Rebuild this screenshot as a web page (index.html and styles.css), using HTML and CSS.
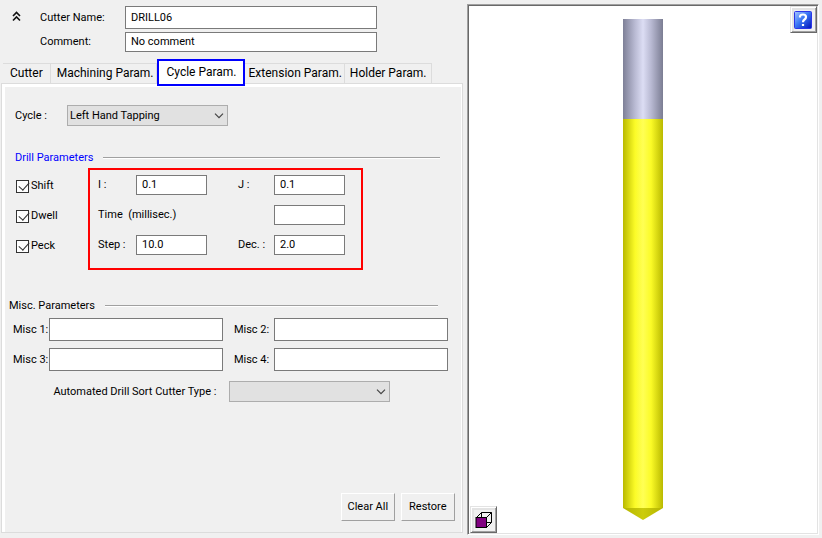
FILE: index.html
```html
<!DOCTYPE html>
<html lang="en">
<head>
  <meta charset="UTF-8">
  <meta name="viewport" content="width=device-width, initial-scale=1.0">
  <title>Cutter Parameters</title>
  <link rel="stylesheet" href="styles.css">
</head>
<body>
  <form class="settings">
    <div class="cutter-head">
      <button type="button" class="collapse" aria-label="Collapse">
        <svg width="9" height="11" viewBox="0 0 9 11"><path d="M1 5 4.500 1.500 8 5M1 9.500 4.500 6 8 9.500" fill="none" stroke="#111" stroke-width="1.600"/></svg>
      </button>
      <div class="cutter-fields">
        <label for="name">Cutter Name:</label>
        <input type="text" id="name" class="name-input" value="DRILL06">
        <label for="comment">Comment:</label>
        <input type="text" id="comment" value="No comment">
      </div>
    </div>
    <nav class="tabs">
      <a href="#" class="tab">Cutter</a>
      <a href="#" class="tab tab-wide">Machining Param.</a>
      <a href="#" class="tab current">Cycle Param.</a>
      <a href="#" class="tab tab-ext">Extension Param.</a>
      <a href="#" class="tab tab-holder">Holder Param.</a>
    </nav>
    <div class="panel">
      <div class="cycle-row">
        <label for="cycle">Cycle :</label>
        <span class="dropdown">
          <select id="cycle"><option>Left Hand Tapping</option></select>
          <svg class="arrow" width="10" height="6" viewBox="0 0 10 6"><path d="M1 .7 5 4.700 9 .7" fill="none" stroke="#444" stroke-width="1.200"/></svg>
        </span>
      </div>
      <div class="title drill-title"><span>Drill Parameters</span><hr></div>
      <div class="drill">
        <div class="checks">
          <label><input type="checkbox" checked>Shift</label>
          <label><input type="checkbox" checked>Dwell</label>
          <label><input type="checkbox" checked>Peck</label>
        </div>
        <div class="values">
          <label for="i">I :</label>
          <input type="text" id="i" value="0.1">
          <label for="j" class="second">J :</label>
          <input type="text" id="j" value="0.1">
          <label for="time" class="time">Time&nbsp; (millisec.)</label>
          <input type="text" id="time">
          <label for="step">Step :</label>
          <input type="text" id="step" value="10.0">
          <label for="dec" class="second">Dec. :</label>
          <input type="text" id="dec" value="2.0">
        </div>
      </div>
      <div class="title misc-title"><span>Misc. Parameters</span><hr></div>
      <div class="misc">
        <label for="misc1">Misc 1:</label>
        <input type="text" id="misc1">
        <label for="misc2" class="second">Misc 2:</label>
        <input type="text" id="misc2">
        <label for="misc3">Misc 3:</label>
        <input type="text" id="misc3">
        <label for="misc4" class="second">Misc 4:</label>
        <input type="text" id="misc4">
      </div>
      <div class="sort-row">
        <label for="sort">Automated Drill Sort Cutter Type :</label>
        <span class="dropdown">
          <select id="sort"><option></option></select>
          <svg class="arrow" width="10" height="6" viewBox="0 0 10 6"><path d="M1 .7 5 4.700 9 .7" fill="none" stroke="#444" stroke-width="1.200"/></svg>
        </span>
      </div>
      <div class="actions">
        <button type="button">Clear All</button>
        <button type="button">Restore</button>
      </div>
    </div>
  </form>
  <div class="preview">
    <svg class="tool" width="40" height="501" viewBox="0 0 40 501">
      <defs>
        <linearGradient id="shank">
          <stop offset="0" stop-color="#7e8097"/>
          <stop offset=".3" stop-color="#b9bad3"/>
          <stop offset=".5" stop-color="#dcddf4"/>
          <stop offset=".7" stop-color="#b9bad3"/>
          <stop offset="1" stop-color="#7b7d93"/>
        </linearGradient>
        <linearGradient id="flute">
          <stop offset="0" stop-color="#b9b900"/>
          <stop offset=".3" stop-color="#fbfb27"/>
          <stop offset=".5" stop-color="#ffff55"/>
          <stop offset=".7" stop-color="#fbfb27"/>
          <stop offset="1" stop-color="#b9b900"/>
        </linearGradient>
        <linearGradient id="tip">
          <stop offset="0" stop-color="#b5b500"/>
          <stop offset=".5" stop-color="#cccc0c"/>
          <stop offset="1" stop-color="#b5b500"/>
        </linearGradient>
      </defs>
      <rect width="40" height="100" fill="url(#shank)"/>
      <rect y="100" width="40" height="389" fill="url(#flute)"/>
      <path d="M0 489H40L20 501z" fill="url(#tip)"/>
    </svg>
    <button type="button" class="tool-btn help" aria-label="Help">
      <svg width="18" height="18" viewBox="0 0 18 18">
        <defs>
          <linearGradient id="blue" x2="1" y2="1">
            <stop offset="0" stop-color="#a9c8ff"/>
            <stop offset=".45" stop-color="#3b78f5"/>
            <stop offset="1" stop-color="#0010b8"/>
          </linearGradient>
        </defs>
        <rect x=".5" y=".5" width="17" height="17" rx="1" fill="url(#blue)" stroke="#2b35e8"/>
        <path d="M6 6.500V5.500Q6.200 3.500 9 3.500Q12 3.500 12 6Q12 7.500 10.500 8.500Q9 9.500 9 11.200M9 13v2" fill="none" stroke="#fff" stroke-width="2.200"/>
      </svg>
    </button>
    <button type="button" class="tool-btn view" aria-label="View">
      <svg width="17" height="16" viewBox="0 0 17 16">
        <path d="M1.500 5.500 6.500.5H16.500V10.500L11.500 15.500M6.500.5V5M11.500 5.500 16.500.5M11.500 10.500H16.500" fill="none" stroke="#000"/>
        <rect x="1" y="5.500" width="10.500" height="10" fill="#800080" stroke="#000"/>
      </svg>
    </button>
  </div>
</body>
</html>
```
FILE: styles.css
```css
* {
  box-sizing: border-box;
}
body {
  margin: 0;
  min-height: 100vh;
  padding: 4px 3px 3px 0;
  display: grid;
  grid-template-columns: 57fr 43fr;
  background: #f0f0f0;
  color: #000;
  font: 11px/20px Roboto, "Noto Sans", sans-serif;
}
input, select, button {
  font: inherit;
  color: inherit;
  margin: 0;
  border-radius: 0;
}
input[type="text"] {
  width: 100%;
  min-width: 0;
  height: 20px;
  padding: 0 5px;
  border: 1px solid #7a7a7a;
  background: #fff;
}
label {
  white-space: nowrap;
}
.settings {
  display: flex;
  flex-direction: column;
  padding: 2px 4px 2px 1px;
}
.cutter-head {
  display: flex;
  align-items: flex-start;
  padding: 0 86px 0 11px;
}
.collapse {
  padding: 5px 0 0;
  width: 28px;
  border: 0;
  background: none;
  line-height: 0;
  text-align: left;
}
.cutter-fields {
  flex: 1;
  display: grid;
  grid-template-columns: 85px 1fr;
  row-gap: 3px;
  align-items: center;
}
.cutter-fields .name-input {
  height: 23px;
}
.tabs {
  display: flex;
  height: 20px;
  margin: 11px 0 0 2px;
  font: 12px/19px Roboto, "Open Sans", sans-serif;
}
.tab {
  padding: 0 7px;
  border: 1px solid #dcdcdc;
  border-width: 1px 1px 0 0;
  color: #000;
  text-decoration: none;
  white-space: nowrap;
}
.tab-wide {
  padding: 0 2px 0 6px;
}
.tab-ext {
  padding: 0 2px 0 4px;
}
.tab-holder {
  padding: 0 5px;
}
.current {
  z-index: 1;
  height: 27px;
  margin-top: -4px;
  padding: 2px 6px 0 8px;
  border: 2px solid #00f;
  background: #fff;
}
.panel {
  flex: 1;
  display: flex;
  flex-direction: column;
  padding: 18px 3px 7px 7px;
  border: 1px solid #dcdcdc;
  box-shadow: inset 1px 3px #fff, inset 3px 0 #fff, inset -1px 0 #fff;
}
.cycle-row {
  display: flex;
  align-items: center;
  padding: 3px 0 0 6px;
}
.cycle-row label {
  width: 52px;
}
.dropdown {
  position: relative;
  width: 161px;
  height: 21px;
}
.dropdown select {
  display: block;
  width: 100%;
  height: 21px;
  padding: 0 20px 0 2px;
  appearance: none;
  border: 1px solid #adadad;
  background: #e1e1e1;
}
.arrow {
  position: absolute;
  right: 4px;
  top: 8px;
  pointer-events: none;
}
.title {
  display: flex;
  align-items: center;
  gap: 10px;
}
.title hr {
  flex: 1;
  height: 2px;
  margin: 0;
  border: 0;
  border-top: 1px solid #a0a0a0;
  background: #fff;
}
.drill-title {
  margin-top: 22px;
  padding: 0 19px 0 6px;
  color: #00f;
}
.misc-title {
  margin-top: 26px;
  padding-right: 21px;
}
.drill {
  display: flex;
  padding-left: 7px;
}
.checks {
  width: 72px;
  display: grid;
  grid-auto-rows: 20px;
  gap: 10px;
  padding-top: 8px;
}
.checks label {
  display: flex;
  align-items: center;
  gap: 2px;
}
.checks input {
  appearance: none;
  width: 13px;
  height: 13px;
  border: 1px solid #333;
  background: #fff;
}
.checks input:checked::before {
  content: "";
  display: block;
  width: 5px;
  height: 9px;
  margin: -1px 0 0 4px;
  border: solid #333;
  border-width: 0 1px 1px 0;
  transform: rotate(42deg);
}
.values {
  display: grid;
  grid-template-columns: 38px 71px 67px 71px;
  grid-auto-rows: 20px;
  gap: 10px 0;
  padding: 5px 16px 13px 8px;
  border: 2px solid #f00;
}
.values .second {
  padding-left: 31px;
}
.time {
  grid-column: 1 / 4;
}
.misc {
  display: grid;
  grid-template-columns: 36px 1fr 51px 1fr;
  gap: 7px 0;
  align-items: center;
  margin-top: 2px;
  padding: 0 11px 0 4px;
}
.misc input[type="text"] {
  height: 23px;
}
.misc .second {
  padding-left: 11px;
}
.sort-row {
  display: flex;
  align-items: center;
  justify-content: center;
  gap: 13px;
  margin-top: 10px;
  padding-right: 24px;
}
.actions {
  display: flex;
  justify-content: flex-end;
  gap: 6px;
  margin-top: auto;
  padding: 0 4px 4px 0;
}
.actions button {
  width: 54px;
  height: 28px;
  padding: 0;
  border: 1px solid;
  border-color: #fff #a0a0a0 #a0a0a0 #fff;
  background: #f0f0f0;
}
.preview {
  position: relative;
  display: flex;
  justify-content: center;
  align-items: flex-start;
  padding: 14px 0 10px;
  border: 1px solid;
  border-color: #a0a0a0 #fff #fff #a0a0a0;
  box-shadow: inset 1px 1px #696969, inset -1px -1px #e3e3e3;
  background: #fff;
}
.tool-btn {
  position: absolute;
  width: 27px;
  height: 27px;
  display: grid;
  place-items: center;
  padding: 0;
  border: 1px solid;
  border-color: #e3e3e3 #696969 #696969 #e3e3e3;
  box-shadow: inset 1px 1px #fff, inset -1px -1px #a0a0a0, inset 3px 3px #e3e3e3;
  background: #f0f0f0;
}
.help {
  top: 1px;
  right: 1px;
}
.view {
  bottom: 1px;
  left: 2px;
}
```
